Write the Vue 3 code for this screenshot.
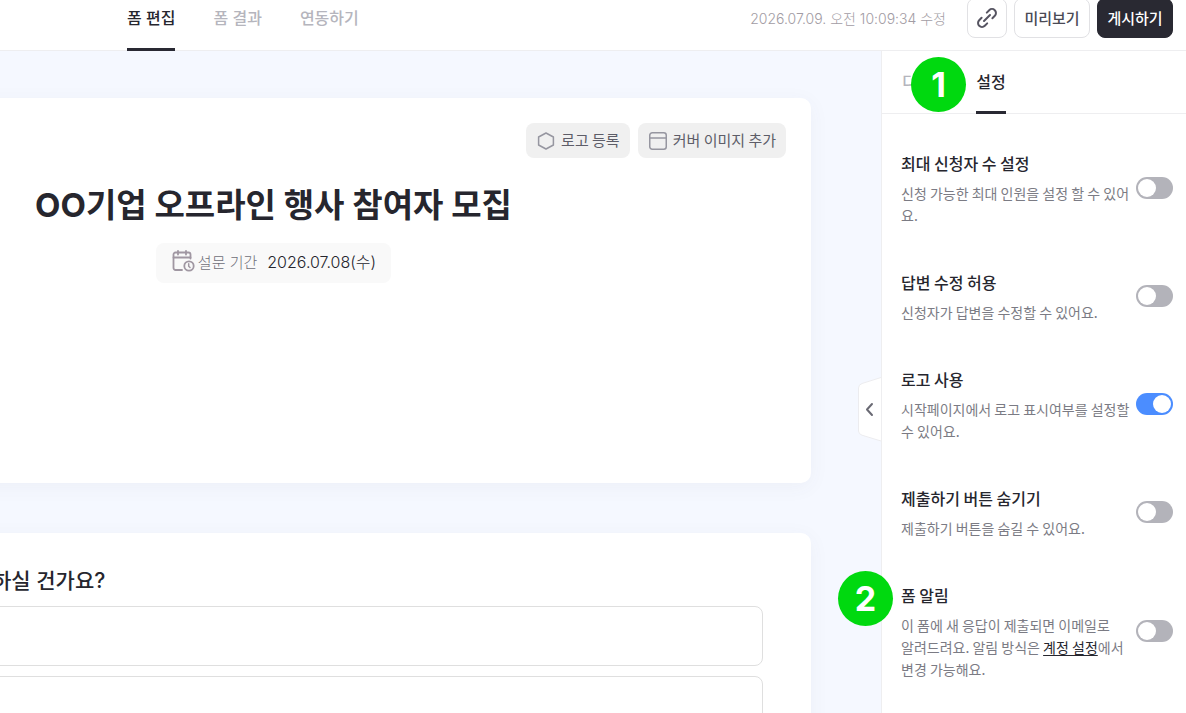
<script setup>
import { ref } from 'vue'

const settings = ref([
  { id: 'limit', title: '최대 신청자 수 설정', text: '신청 가능한 최대 인원을 설정 할 수 있어요.', on: false },
  { id: 'edit', title: '답변 수정 허용', text: '신청자가 답변을 수정할 수 있어요.', on: false },
  { id: 'logo', title: '로고 사용', text: '시작페이지에서 로고 표시여부를 설정할 수 있어요.', on: true },
  { id: 'submit', title: '제출하기 버튼 숨기기', text: '제출하기 버튼을 숨길 수 있어요.', on: false },
  {
    id: 'notify',
    title: '폼 알림',
    text: '이 폼에 새 응답이 제출되면 이메일로 알려드려요. 알림 방식은 ',
    link: '계정 설정',
    after: '에서 변경 가능해요.',
    on: false,
    badge: 2
  }
])
</script>

<template>
  <div class="page">
    <header class="topbar">
      <nav class="tabs">
        <a href="#" class="tab active">폼 편집</a>
        <a href="#" class="tab">폼 결과</a>
        <a href="#" class="tab">연동하기</a>
      </nav>
      <div class="actions">
        <span class="saved">2026.07.09. 오전 10:09:34 수정</span>
        <button type="button" class="btn icon-btn" aria-label="링크 복사">
          <svg width="22" height="22" viewBox="0 0 22 22" fill="none" stroke="#565461" stroke-width="2" stroke-linecap="round">
            <path d="M8 14 14 8" />
            <path d="M10.800 5.600 13.200 3.200a3.950 3.950 0 0 1 5.600 5.600L16.400 11.200" />
            <path d="M11.200 16.400 8.800 18.800a3.950 3.950 0 0 1-5.600-5.600L5.600 10.800" />
          </svg>
        </button>
        <button type="button" class="btn">미리보기</button>
        <button type="button" class="btn primary">게시하기</button>
      </div>
    </header>

    <div class="body">
      <main class="canvas">
        <section class="card cover">
          <div class="cover-actions">
            <button type="button" class="chip">
              <svg width="20" height="20" viewBox="0 0 20 20" fill="none" stroke="#9696a0" stroke-width="1.5" stroke-linejoin="round">
                <path d="M10 2 17.4 6v8L10 18 2.6 14V6z" />
              </svg>
              로고 등록
            </button>
            <button type="button" class="chip">
              <svg width="20" height="20" viewBox="0 0 20 20" fill="none" stroke="#9696a0" stroke-width="1.5">
                <rect x="1.75" y="1.75" width="16.5" height="16.5" rx="2.5" />
                <path d="M2 7h16" />
              </svg>
              커버 이미지 추가
            </button>
          </div>
          <h1>OO기업 오프라인 행사 참여자 모집</h1>
          <div class="period">
            <svg width="24" height="24" viewBox="0 0 24 24" fill="none" stroke="#a097a2" stroke-width="1.8" stroke-linecap="round" stroke-linejoin="round">
              <path d="M11 21H4.500a2 2 0 0 1-2-2V5.500a2 2 0 0 1 2-2h13a2 2 0 0 1 2 2V9.500" />
              <path d="M2.500 8.500h17M7 1.800v3.700M15 1.800v3.700" />
              <circle cx="18" cy="17" r="4.700" />
              <path d="M17.700 14.800v2.500l1.300 1.200" stroke-width="1.500" />
            </svg>
            <span class="period-label">설문 기간</span>
            <time datetime="2026-07-08">2026.07.08(수)</time>
          </div>
        </section>

        <section class="card question">
          <h2 id="question">하실 건가요?</h2>
          <input type="text" class="answer" aria-labelledby="question" />
          <input type="text" class="answer" aria-labelledby="question" />
        </section>
      </main>

      <aside class="panel">
        <button type="button" class="collapse" aria-label="패널 접기">
          <svg width="23" height="65" viewBox="0 0 23 65">
            <path d="M23 .5 4 6.500Q.5 7.700.5 11v43q0 3 3.500 4.200L23 64" fill="#fff" stroke="#ececef" />
            <path d="M14 27 9 32.500 14 38" fill="none" stroke="#6a6a74" stroke-width="2" stroke-linecap="round" stroke-linejoin="round" />
          </svg>
        </button>

        <nav class="panel-tabs">
          <a href="#" class="tab">디자인<span class="badge badge-tab">1</span></a>
          <a href="#" class="tab active">설정</a>
        </nav>

        <ul class="settings">
          <li v-for="s in settings" :key="s.id" class="setting">
            <span v-if="s.badge" class="badge badge-row">{{ s.badge }}</span>
            <div class="setting-text">
              <label :for="s.id">{{ s.title }}</label>
              <p :class="{ keep: s.link }">{{ s.text }}<a v-if="s.link" href="#">{{ s.link }}</a>{{ s.after }}</p>
            </div>
            <input :id="s.id" v-model="s.on" type="checkbox" role="switch" class="switch" />
          </li>
        </ul>
      </aside>
    </div>
  </div>
</template>

<style>
body {
  margin: 0;
  overflow: hidden;
}
</style>

<style scoped>
* {
  box-sizing: border-box;
}
.page {
  display: flex;
  flex-direction: column;
  height: 100vh;
  overflow: hidden;
  background: #f5f8ff;
  color: #26262e;
  font-family: Inter, "Noto Sans CJK KR", sans-serif;
  font-size: 16px;
}
button,
input {
  font: inherit;
  margin: 0;
}
a {
  color: inherit;
  text-decoration: none;
}
.topbar {
  flex: none;
  display: flex;
  justify-content: space-between;
  height: 66px;
  margin-top: -15px;
  padding: 0 13px 0 127px;
  background: #fff;
  box-shadow: inset 0 -1px #eeeef0;
}
.tabs {
  display: flex;
  gap: 38px;
}
.tab {
  position: relative;
  display: flex;
  align-items: center;
  padding-bottom: 3px;
  color: #b5b5bd;
  font-weight: 500;
}
.tab.active {
  color: #26262e;
  box-shadow: inset 0 -3px #292933;
}
.actions {
  display: flex;
  align-items: center;
  gap: 7px;
}
.saved {
  margin-right: 14px;
  color: #a29ca4;
  font-size: 14px;
  font-weight: 300;
}
.btn {
  display: flex;
  align-items: center;
  justify-content: center;
  height: 40px;
  width: 76px;
  padding: 0 0 2px;
  border: 1px solid #e1e1e4;
  border-radius: 8px;
  background: #fff;
  color: #4a4a55;
  font-size: 15px;
  font-weight: 500;
}
.icon-btn {
  width: 40px;
  padding: 0;
}
.primary {
  border-color: #292932;
  background: #292932;
  color: #fff;
}
.body {
  flex: 1;
  display: flex;
  min-height: 0;
}
.canvas {
  flex: 1;
  min-width: 0;
  padding: 47px 70px 0 0;
  overflow: hidden;
}
.card {
  margin-left: -264px;
  border-radius: 10px;
  background: #fff;
  box-shadow: 0 4px 20px rgba(70, 70, 90, 0.05);
}
.cover {
  display: flex;
  flex-direction: column;
  align-items: center;
  min-height: 385px;
  padding: 25px;
}
.cover-actions {
  align-self: flex-end;
  display: flex;
  gap: 8px;
}
.chip {
  display: flex;
  align-items: center;
  gap: 5px;
  height: 35px;
  padding: 0 10px 2px;
  border: 0;
  border-radius: 8px;
  background: #f0f0f0;
  color: #5d5d68;
  font-family: "Noto Sans CJK KR", sans-serif;
  font-size: 15px;
}
.chip svg {
  margin-top: 2px;
}
h1 {
  margin: 24px 0 15px;
  font-size: 33px;
  font-weight: 700;
  line-height: 46px;
}
.period {
  display: flex;
  align-items: center;
  height: 40px;
  padding: 0 15px 4px;
  border-radius: 8px;
  background: #f9f9f9;
  font-weight: 300;
}
.period-label {
  margin: 0 10px 0 3px;
  color: #6e6e78;
  font-size: 15px;
}
.question {
  display: flex;
  flex-direction: column;
  gap: 10px;
  margin-top: 50px;
  padding: 33px 48px;
}
h2 {
  margin: 0 0 0 208px;
  font-size: 21px;
  font-weight: 500;
  line-height: 30px;
}
.answer {
  height: 60px;
  border: 1px solid #dfdfdf;
  border-radius: 8px;
  background: #fff;
}
.panel {
  position: relative;
  flex: none;
  width: 305px;
  border-left: 1px solid #eeeef0;
  background: #fff;
}
.collapse {
  position: absolute;
  top: 326px;
  left: -24px;
  padding: 0;
  border: 0;
  background: none;
}
.collapse svg {
  display: block;
}
.panel-tabs {
  display: flex;
  gap: 30px;
  height: 63px;
  padding-left: 20px;
  box-shadow: inset 0 -1px #eeeef0;
}
.badge {
  position: absolute;
  display: flex;
  align-items: center;
  justify-content: center;
  width: 55px;
  height: 55px;
  border-radius: 50%;
  background: #00d90f;
  color: #fff;
  font-size: 34px;
  font-weight: 700;
}
.badge-tab {
  top: 6px;
  left: 9px;
}
.badge-row {
  top: -12px;
  left: -63px;
}
.settings {
  display: flex;
  flex-direction: column;
  gap: 44px;
  margin: 0;
  padding: 37px 13px 0 19px;
  list-style: none;
}
.setting {
  position: relative;
  display: flex;
  align-items: center;
  gap: 4px;
  font-family: "Noto Sans CJK KR", sans-serif;
}
.setting .badge {
  font-family: Inter, sans-serif;
}
.setting-text {
  flex: 1;
}
.setting label {
  display: block;
  margin-bottom: 7px;
  font-weight: 500;
  line-height: 24px;
}
.setting p {
  margin: 0;
  color: #7b7b84;
  font-size: 14px;
  line-height: 22px;
}
.setting p.keep {
  word-break: keep-all;
}
.setting p a {
  color: #26262e;
  text-decoration: underline;
  text-underline-offset: 2px;
}
.switch {
  flex: none;
  appearance: none;
  display: flex;
  align-items: center;
  width: 37px;
  height: 22px;
  margin-bottom: 2px;
  padding: 0 2px;
  border-radius: 11px;
  background: #b3b3ba;
}
.switch::before {
  content: "";
  width: 18px;
  height: 18px;
  border-radius: 50%;
  background: #fff;
}
.switch:checked {
  justify-content: flex-end;
  background: #4b8dff;
}
</style>
